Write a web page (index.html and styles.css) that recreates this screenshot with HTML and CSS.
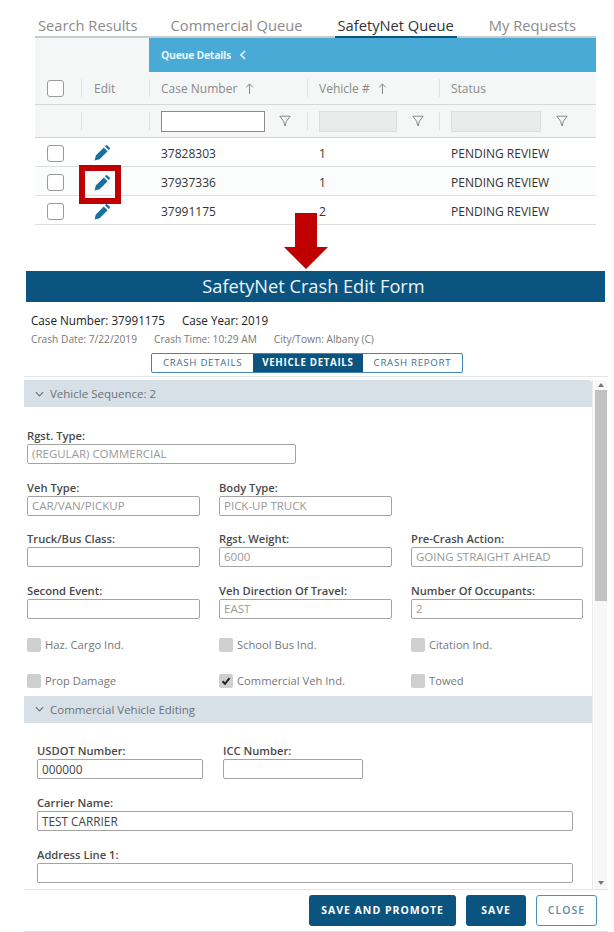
FILE: index.html
```html
<!DOCTYPE html>
<html lang="en">
<head>
    <meta charset="UTF-8">
    <title>SafetyNet Queue</title>
    <link rel="stylesheet" href="styles.css">
</head>
<body>
<svg class="icon-defs" width="0" height="0">
    <symbol id="pencil" viewBox="0 0 16 16">
        <path d="M.6 15.4 1.8 10.4 9.8 2.4 13.6 6.2 5.6 14.2ZM10.9 1.3 11.8.4Q12.6-.2 13.4.4L15.6 2.6Q16.2 3.4 15.6 4.2L14.7 5.1Z"/>
    </symbol>
    <symbol id="funnel" viewBox="0 0 12 12">
        <path d="M.8 1.2H11.2L7.4 6.2 6 11 4.6 6.2Z" fill="none" stroke="currentColor"/>
    </symbol>
    <symbol id="chev" viewBox="0 0 10 6">
        <path d="M1 1 5 5 9 1" fill="none" stroke="currentColor" stroke-width="1.3"/>
    </symbol>
    <symbol id="up" viewBox="0 0 9 11">
        <path d="M4.5 11V1M1.2 4.3 4.5 1 7.8 4.3" fill="none" stroke="currentColor"/>
    </symbol>
</svg>

<div class="queue">
    <div class="tabs">
        <span class="tab">Search Results</span>
        <span class="tab">Commercial Queue</span>
        <span class="tab active">SafetyNet Queue</span>
        <span class="tab">My Requests</span>
    </div>

    <div class="row band">
        <div class="c-check"></div>
        <div class="c-edit"></div>
        <div class="band-title">Queue Details<svg class="band-arrow" viewBox="0 0 6 10"><path d="M5 1 1 5 5 9" fill="none" stroke="currentColor" stroke-width="1.6"/></svg></div>
    </div>
    <div class="row head">
        <div class="c-check"><span class="box"></span></div>
        <div class="c-edit sep">Edit</div>
        <div class="c-case sep">Case Number <svg class="sort"><use href="#up"/></svg></div>
        <div class="c-veh sep">Vehicle # <svg class="sort"><use href="#up"/></svg></div>
        <div class="c-status sep">Status</div>
    </div>
    <div class="row filter">
        <div class="c-check"></div>
        <div class="c-edit sep"></div>
        <div class="c-case sep"><span class="f-input"></span><svg class="funnel"><use href="#funnel"/></svg></div>
        <div class="c-veh sep"><span class="f-input off"></span><svg class="funnel"><use href="#funnel"/></svg></div>
        <div class="c-status sep"><span class="f-input off"></span><svg class="funnel"><use href="#funnel"/></svg></div>
    </div>
    <div class="row item">
        <div class="c-check"><span class="box"></span></div>
        <div class="c-edit"><svg class="pencil"><use href="#pencil"/></svg></div>
        <div class="c-case">37828303</div>
        <div class="c-veh">1</div>
        <div class="c-status">PENDING REVIEW</div>
    </div>
    <div class="row item alt">
        <div class="c-check"><span class="box"></span></div>
        <div class="c-edit"><svg class="pencil"><use href="#pencil"/></svg></div>
        <div class="c-case">37937336</div>
        <div class="c-veh">1</div>
        <div class="c-status">PENDING REVIEW</div>
    </div>
    <div class="row item">
        <div class="c-check"><span class="box"></span></div>
        <div class="c-edit"><svg class="pencil"><use href="#pencil"/></svg></div>
        <div class="c-case">37991175</div>
        <div class="c-veh">2</div>
        <div class="c-status">PENDING REVIEW</div>
    </div>
</div>

<!-- callouts drawn over the screenshot -->
<div class="red-box"></div>
<svg class="red-arrow" viewBox="0 0 44 56"><path d="M11 0H33V34H44L22 56 0 34H11Z"/></svg>

<div class="form">
    <div class="form-title">SafetyNet Crash Edit Form</div>
    <div class="case-line"><span>Case Number: 37991175</span><span>Case Year: 2019</span></div>
    <div class="sub-line"><span>Crash Date: 7/22/2019</span><span>Crash Time: 10:29 AM</span><span>City/Town: Albany (C)</span></div>
    <div class="seg">
        <span class="seg-btn">CRASH DETAILS</span>
        <span class="seg-btn on">VEHICLE DETAILS</span>
        <span class="seg-btn">CRASH REPORT</span>
    </div>

    <div class="body">
        <div class="scroll">
            <div class="section first"><svg class="chev"><use href="#chev"/></svg>Vehicle Sequence: 2</div>
            <div class="fields">
                <div class="grid">
                    <label class="field wide">Rgst. Type:<span class="inp">(REGULAR) COMMERCIAL</span></label>
                    <label class="field">Veh Type:<span class="inp">CAR/VAN/PICKUP</span></label>
                    <label class="field">Body Type:<span class="inp">PICK-UP TRUCK</span></label>
                    <div></div>
                    <label class="field">Truck/Bus Class:<span class="inp"></span></label>
                    <label class="field">Rgst. Weight:<span class="inp">6000</span></label>
                    <label class="field">Pre-Crash Action:<span class="inp">GOING STRAIGHT AHEAD</span></label>
                    <label class="field">Second Event:<span class="inp"></span></label>
                    <label class="field">Veh Direction Of Travel:<span class="inp">EAST</span></label>
                    <label class="field">Number Of Occupants:<span class="inp">2</span></label>
                </div>
                <div class="grid checks">
                    <div class="chk"><span class="cb"></span>Haz. Cargo Ind.</div>
                    <div class="chk"><span class="cb"></span>School Bus Ind.</div>
                    <div class="chk"><span class="cb"></span>Citation Ind.</div>
                    <div class="chk"><span class="cb"></span>Prop Damage</div>
                    <div class="chk"><span class="cb"><svg viewBox="0 0 14 14"><path d="M3.5 7.2 6 9.8 10.5 4.2" fill="none" stroke="#222" stroke-width="2"/></svg></span>Commercial Veh Ind.</div>
                    <div class="chk"><span class="cb"></span>Towed</div>
                </div>
            </div>
            <div class="section"><svg class="chev"><use href="#chev"/></svg>Commercial Vehicle Editing</div>
            <div class="carrier">
                <div class="carrier-top">
                    <label class="field usdot">USDOT Number:<span class="inp dark">000000</span></label>
                    <label class="field icc">ICC Number:<span class="inp"></span></label>
                </div>
                <label class="field">Carrier Name:<span class="inp dark">TEST CARRIER</span></label>
                <label class="field">Address Line 1:<span class="inp"></span></label>
            </div>
        </div>
        <div class="scrollbar">
            <span class="sb-up"></span>
            <span class="sb-thumb"></span>
            <span class="sb-down"></span>
        </div>
    </div>

    <div class="actions">
        <span class="btn solid">SAVE AND PROMOTE</span>
        <span class="btn solid">SAVE</span>
        <span class="btn ghost">CLOSE</span>
    </div>
</div>
</body>
</html>
```

FILE: styles.css
```css
*{
    box-sizing: border-box;
}
html,body{
    margin:0;
    height:932px;
    overflow:hidden;
}
body{
    position: relative;
    background:#fff;
    font-family:"Open Sans","Liberation Sans",sans-serif;
    color:#444;
}
.icon-defs{
    position: absolute;
}

/* queue table */
.queue{
    margin:0 18px 0 35px;
    padding-top:15px;
}
.tabs{
    display:flex;
    height:23px;
    border-bottom:2px solid #c4ccd2;
    padding-left:2px;
    font-size:14.7px;
    color:#8b8b8b;
}
.tab{
    height:23px;
    line-height:21px;
    padding:0 1px;
    margin-right:31px;
    white-space:nowrap;
}
.tab.active{
    color:#333;
    border-bottom:2px solid #0b5480;
    padding:0 3px;
}
.row{
    display:flex;
    align-items:center;
    font-size:12px;
}
.c-check{
    width:46px;
    flex:none;
    padding-left:12px;
}
.c-edit{
    width:68px;
    flex:none;
    height:100%;
    display:flex;
    align-items:center;
    padding-left:13px;
}
.c-case{
    width:158px;
    flex:none;
    height:100%;
    display:flex;
    align-items:center;
    padding-left:12px;
}
.c-veh{
    width:132px;
    flex:none;
    height:100%;
    display:flex;
    align-items:center;
    padding-left:12px;
}
.c-status{
    flex:1;
    height:100%;
    display:flex;
    align-items:center;
    padding-left:12px;
}
.band{
    height:34px;
    background:#f5f6f6;
}
.band-title{
    flex:1;
    height:100%;
    display:flex;
    align-items:center;
    padding-left:12px;
    background:#4aaad6;
    color:#e8f4fa;
    font-weight:700;
    font-size:10.5px;
    letter-spacing:-.3px;
}
.band-arrow{
    width:6px;
    height:10px;
    margin-left:9px;
}
.head{
    height:33px;
    background:#f5f6f6;
    border-bottom:1px solid #d6d9db;
    color:#8a8a8a;
}
.filter{
    height:33px;
    background:#f5f6f6;
    border-bottom:1px solid #cfd3d5;
}
.sep{
    position: relative;
}
.sep::before{
    content:"";
    position: absolute;
    left:0;
    top:7px;
    bottom:7px;
    width:1px;
    background:#dfe1e2;
}
.sort{
    width:9px;
    height:11px;
    margin-left:8px;
    color:#8a8a8a;
}
.box{
    display:block;
    width:17px;
    height:17px;
    border:1.5px solid #9a9a9a;
    border-radius:3px;
    background:#fff;
}
.f-input{
    display:block;
    width:104px;
    height:21px;
    background:#fff;
    border:1px solid #8c8c8c;
}
.c-veh .f-input{
    width:78px;
}
.c-status .f-input{
    width:90px;
}
.f-input.off{
    background:#e9eaea;
    border-color:#dcdddd;
}
.funnel{
    width:12px;
    height:12px;
    margin-left:14px;
    color:#888;
}
.c-veh .funnel{
    margin-left:15px;
}
.c-status .funnel{
    margin-left:15px;
}
.item{
    height:29px;
    padding-top:2px;
    border-bottom:1px solid #dcdfe0;
    color:#333;
}
.item + .item{
    padding-top:3px;
}
.item.alt{
    background:#fbfcfc;
}
.pencil{
    width:16px;
    height:16px;
    fill:#17709f;
}

/* callouts */
.red-box{
    position: absolute;
    left:79px;
    top:165px;
    width:42px;
    height:39px;
    border:6px solid #c00000;
}
.red-arrow{
    position: absolute;
    left:284px;
    top:213px;
    width:44px;
    height:56px;
    fill:#c00000;
}

/* edit form */
.form{
    position: absolute;
    left:24px;
    top:271px;
    width:584px;
    height:661px;
    display:flex;
    flex-direction:column;
    border-bottom:1px solid #dfe3e6;
}
.form-title{
    height:31px;
    margin:0 3px 0 2px;
    padding-right:4px;
    background:#0b5480;
    color:#eef4f8;
    font-size:18.2px;
    line-height:31px;
    text-align:center;
}
.case-line{
    display:flex;
    gap:17px;
    margin:9px 0 0 7px;
    height:18px;
    line-height:18px;
    font-size:11.7px;
    color:#222;
}
.sub-line{
    display:flex;
    gap:17px;
    margin:2px 0 0 7px;
    height:16px;
    line-height:16px;
    font-size:10.2px;
    color:#777;
}
.seg{
    display:flex;
    align-self:flex-start;
    margin:6px 0 0 127px;
    height:20px;
    border:1px solid #3f87ab;
    border-radius:2px;
    font-size:9.7px;
    letter-spacing:.7px;
    color:#3d6f8c;
}
.seg-btn{
    padding:0 11px;
    line-height:18px;
    white-space:nowrap;
}
.seg-btn.on{
    background:#0b5480;
    color:#fff;
    font-weight:700;
    padding:0 9px;
}
.body{
    flex:1;
    min-height:0;
    display:flex;
    margin-top:3px;
    border-top:1px solid #e3e6e8;
    padding-top:3px;
}
.scroll{
    width:569px;
    flex:none;
    overflow:hidden;
    border-right:1px solid #e8eaeb;
}
.section{
    display:flex;
    align-items:center;
    height:27px;
    background:#d7e0e6;
    color:#6a7278;
    font-size:11.5px;
}
.section.first{
    border-radius:0 3px 0 0;
}
.chev{
    width:9px;
    height:6px;
    margin:0 6px 0 11px;
    color:#6a7278;
}
.fields{
    padding:22px 9px 0 3px;
}
.grid{
    display:grid;
    grid-template-columns:172.5px 172.5px 172px;
    column-gap:19.5px;
    row-gap:16.5px;
}
.field{
    display:block;
    font-size:11.2px;
    font-weight:600;
    line-height:14px;
    color:#4a4a4a;
}
.field.wide{
    grid-column:1 / -1;
    width:269px;
}
.inp{
    display:block;
    height:20px;
    margin-top:1px;
    border:1px solid #a4a4a4;
    border-radius:2px;
    padding:0 4px;
    font-size:11.5px;
    font-weight:400;
    line-height:18px;
    color:#999;
    background:#fff;
    white-space:nowrap;
}
.inp.dark{
    color:#444;
    font-size:11.8px;
}
.checks{
    margin-top:19px;
    row-gap:22px;
}
.chk{
    display:flex;
    align-items:center;
    height:14px;
    font-size:11.2px;
    color:#777;
}
.cb{
    display:block;
    width:14px;
    height:14px;
    margin-right:4px;
    border-radius:2px;
    background:#cfcfcf;
}
.cb svg{
    display:block;
    width:14px;
    height:14px;
}
.section + .carrier{
    padding-top:21px;
}
.carrier{
    padding:0 19px 0 13px;
    display:flex;
    flex-direction:column;
    gap:17px;
}
.carrier-top{
    display:flex;
    gap:20px;
}
.usdot{
    width:166px;
}
.icc{
    width:140px;
}
.section:not(.first){
    margin-top:8px;
}
.scrollbar{
    flex:none;
    width:13px;
    margin-left:1px;
    display:flex;
    flex-direction:column;
    align-items:center;
    background:#f7f7f7;
}
.sb-up{
    margin-top:3px;
    border:3px solid transparent;
    border-top:0;
    border-bottom:4px solid #777;
}
.sb-thumb{
    width:12px;
    height:211px;
    margin-top:3px;
    background:#c2c2c2;
}
.sb-down{
    margin-top:auto;
    margin-bottom:4px;
    border:3px solid transparent;
    border-bottom:0;
    border-top:4px solid #777;
}
.actions{
    display:flex;
    justify-content:flex-end;
    gap:10px;
    height:42px;
    padding:5px 11px 0 0;
    border-top:1px solid #e3e6e8;
}
.btn{
    height:31px;
    line-height:31px;
    border-radius:3px;
    font-size:10.5px;
    font-weight:700;
    letter-spacing:1px;
    text-align:center;
    white-space:nowrap;
}
.btn.solid{
    background:#0b5480;
    color:#fff;
    padding:0 12px;
}
.btn.solid + .btn.solid{
    width:60px;
}
.btn.ghost{
    width:61px;
    border:1px solid #4b94b6;
    color:#5e8ba3;
    font-weight:600;
    line-height:29px;
}
```
